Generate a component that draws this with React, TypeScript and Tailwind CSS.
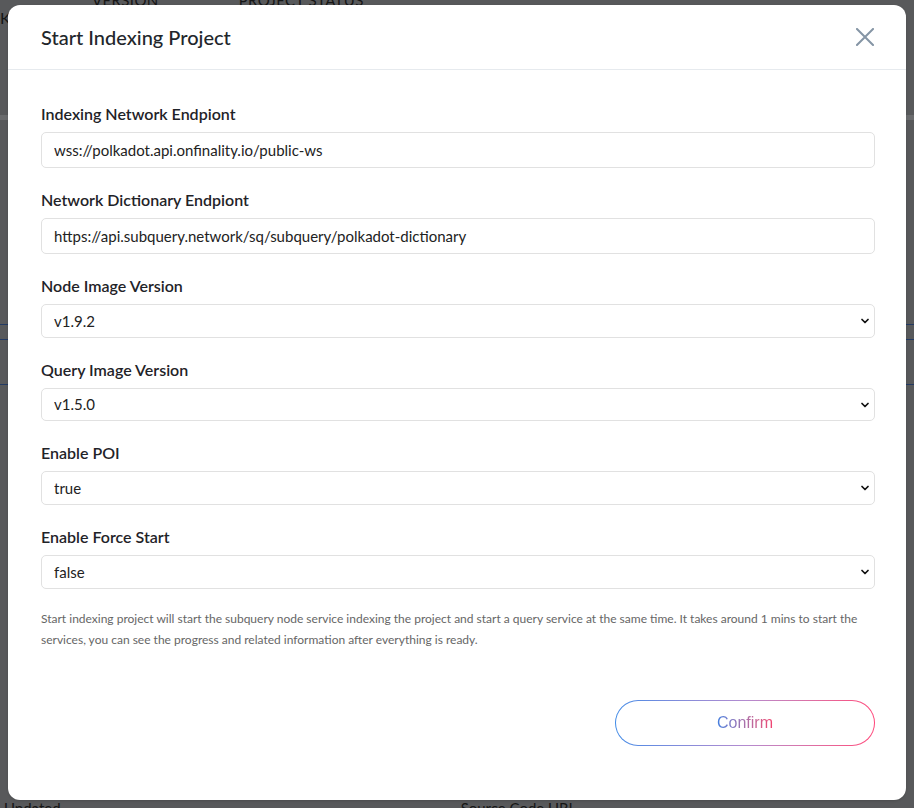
import { ChevronDown } from "lucide-react";

type Field = {
  label: string;
  value: string;
  kind: "input" | "select";
  options?: string[];
};

const FIELDS: Field[] = [
  { label: "Indexing Network Endpiont", value: "wss://polkadot.api.onfinality.io/public-ws", kind: "input" },
  {
    label: "Network Dictionary Endpiont",
    value: "https://api.subquery.network/sq/subquery/polkadot-dictionary",
    kind: "input",
  },
  { label: "Node Image Version", value: "v1.9.2", kind: "select", options: ["v1.9.2", "v1.9.1", "v1.9.0"] },
  { label: "Query Image Version", value: "v1.5.0", kind: "select", options: ["v1.5.0", "v1.4.0"] },
  { label: "Enable POI", value: "true", kind: "select", options: ["true", "false"] },
  { label: "Enable Force Start", value: "false", kind: "select", options: ["false", "true"] },
];

const labelFont = { fontFamily: "Lato, 'Noto Sans', sans-serif" };

function FormField({ field }: { field: Field }) {
  return (
    <div className="flex flex-col">
      <label className="text-[16px] font-semibold leading-5 text-[#1f2328]" style={labelFont}>
        {field.label}
      </label>
      {field.kind === "input" ? (
        <input
          readOnly
          value={field.value}
          className="mt-2 h-[36px] w-full rounded-[5px] border border-[#e1e1e1] bg-white px-3 text-[15px] text-[#222] outline-none"
          style={labelFont}
        />
      ) : (
        <div className="relative mt-2">
          <select
            defaultValue={field.value}
            className="h-[33.7px] w-full appearance-none rounded-[5px] border border-[#e1e1e1] bg-white px-3 text-[15px] text-[#222] outline-none"
            style={labelFont}
          >
            {field.options?.map((o) => (
              <option key={o} value={o}>
                {o}
              </option>
            ))}
          </select>
          <ChevronDown
            className="pointer-events-none absolute right-[4px] top-1/2 -translate-y-1/2 text-[#111]"
            size={12}
            strokeWidth={3.5}
          />
        </div>
      )}
    </div>
  );
}

export default function App() {
  return (
    <div className="relative h-[808px] w-[914px] overflow-hidden bg-[#58595b]" style={{ fontFamily: "Lato, sans-serif" }}>
      {/* page behind the overlay */}
      <div className="flex h-full flex-col justify-between text-[15px] text-[#161616]">
        <div className="flex flex-col">
          <div className="flex items-start gap-[80px] leading-4">
            <span className="-mt-[8px] pl-[92px] uppercase tracking-wide">Version</span>
            <span className="-mt-[8px] uppercase tracking-wide">Project Status</span>
          </div>
          <span className="mt-[-2px] text-[16px]">K</span>
          <div className="mt-[85px] h-[5px] w-full bg-[#6a6b6d]" />
          <div className="mt-[204px] h-px w-full bg-[#233a63]" />
          <div className="mt-[14px] h-px w-full bg-[#233a63]" />
          <div className="mt-[44px] h-px w-full bg-[#233a63]" />
        </div>
        <div className="flex gap-[400px] pl-[4px] leading-4">
          <span className="mb-[-8px]">Updated</span>
          <span className="mb-[-8px]">Source Code URL</span>
        </div>
      </div>

      {/* modal */}
      <div className="absolute inset-0 flex items-start justify-center pt-[5px]">
        <div className="flex h-[795px] w-[898px] flex-col rounded-[12px] bg-white shadow-sm">
          <div className="flex h-[65px] items-center justify-between border-b border-[#e6eaee] pl-[33px] pr-[31px]">
            <h2 className="text-[20px] font-medium text-[#22262b]" style={labelFont}>
              Start Indexing Project
            </h2>
            <button className="flex h-[20px] w-[20px] items-center justify-center">
              <svg width="18" height="18" viewBox="0 0 18 18" fill="none">
                <path d="M1 1L17 17M17 1L1 17" stroke="#8595a5" strokeWidth="2" strokeLinecap="square" />
              </svg>
            </button>
          </div>

          <div className="flex flex-1 flex-col pl-[33px] pr-[31px] pt-[34px]">
            <div className="flex flex-col gap-[22px]">
              {FIELDS.map((f) => (
                <FormField key={f.label} field={f} />
              ))}
            </div>

            <p
              className="mt-[19px] text-[12px] leading-[21px] text-[#666]"
              style={{ fontFamily: "'Source Sans Pro', Lato, sans-serif" }}
            >
              Start indexing project will start the subquery node service indexing the project and start a query
              service at the same time. It takes around 1 mins to start the services, you can see the progress and
              related information after everything is ready.
            </p>

            <div className="mt-[50px] flex justify-end">
              <div className="rounded-full bg-linear-to-r from-[#3f8ae6] via-[#b38bd0] to-[#ff4378] p-px">
                <button className="flex h-[44px] w-[258px] items-center justify-center rounded-full bg-white">
                  <span
                    className="bg-linear-to-r from-[#3f7fe0] to-[#f2406f] bg-clip-text text-[16px] text-transparent"
                    style={{ fontFamily: "'Liberation Sans', Arial, sans-serif" }}
                  >
                    Confirm
                  </span>
                </button>
              </div>
            </div>
          </div>
        </div>
      </div>
    </div>
  );
}
